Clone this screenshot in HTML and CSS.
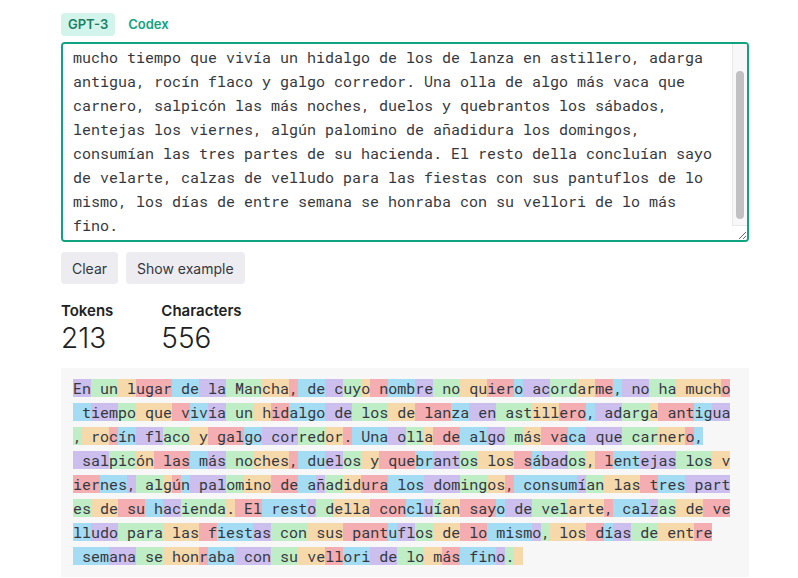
FILE: index.html
```html
<!DOCTYPE html>
<html lang="en">
  <head>
    <meta charset="UTF-8" />
    <meta name="viewport" content="width=device-width, initial-scale=1.0" />
    <title>Tokenizer</title>
    <link rel="stylesheet" href="styles.css">
  </head>
  <body>
    <div class="page">
      <div class="tabs">
        <span class="tab active">GPT-3</span>
        <span class="tab">Codex</span>
      </div>

      <div class="prompt-wrap">
        <textarea class="prompt" spellcheck="false">En un lugar de la Mancha, de cuyo nombre no quiero acordarme, no ha mucho tiempo que vivía un hidalgo de los de lanza en astillero, adarga antigua, rocín flaco y galgo corredor. Una olla de algo más vaca que carnero, salpicón las más noches, duelos y quebrantos los sábados, lentejas los viernes, algún palomino de añadidura los domingos, consumían las tres partes de su hacienda. El resto della concluían sayo de velarte, calzas de velludo para las fiestas con sus pantuflos de lo mismo, los días de entre semana se honraba con su vellori de lo más fino. </textarea>
        <div class="scrollbar"><div class="scrollbar-thumb"></div></div>
      </div>

      <div class="actions">
        <button class="btn">Clear</button>
        <button class="btn">Show example</button>
      </div>

      <div class="stats">
        <div class="stat">
          <div class="stat-label">Tokens</div>
          <div class="stat-value">213</div>
        </div>
        <div class="stat">
          <div class="stat-label">Characters</div>
          <div class="stat-value">556</div>
        </div>
      </div>

      <div class="tokens">
        <span>En</span><span> un</span><span> l</span><span>ugar</span><span> de</span><span> la</span><span> Man</span><span>cha</span><span>,</span><span> de</span><span> c</span><span>uy</span><span>o</span><span> n</span><span>omb</span><span>re</span><span> no</span><span> qu</span><span>ier</span><span>o</span><span> ac</span><span>ord</span><span>ar</span><span>me</span><span>,</span><span> no</span><span> ha</span><span> much</span><span>o</span>
        <span> t</span><span>iem</span><span>po</span><span> que</span><span> v</span><span>iv</span><span>ía</span><span> un</span><span> h</span><span>id</span><span>algo</span><span> de</span><span> los</span><span> de</span><span> lan</span><span>za</span><span> en</span><span> ast</span><span>ill</span><span>ero</span><span>,</span><span> ad</span><span>arg</span><span>a</span><span> ant</span><span>ig</span><span>ua</span>
        <span>,</span><span> ro</span><span>c</span><span>ín</span><span> fl</span><span>aco</span><span> y</span><span> gal</span><span>go</span><span> cor</span><span>red</span><span>or</span><span>.</span><span> Una</span><span> o</span><span>ll</span><span>a</span><span> de</span><span> al</span><span>go</span><span> m</span><span>ás</span><span> va</span><span>ca</span><span> que</span><span> car</span><span>ner</span><span>o</span><span>,</span>
        <span> sal</span><span>pic</span><span>ón</span><span> las</span><span> m</span><span>ás</span><span> no</span><span>ches</span><span>,</span><span> du</span><span>el</span><span>os</span><span> y</span><span> que</span><span>br</span><span>ant</span><span>os</span><span> los</span><span> s</span><span>á</span><span>bad</span><span>os</span><span>,</span><span> l</span><span>ent</span><span>ejas</span><span> los</span><span> v</span>
        <span>ier</span><span>nes</span><span>,</span><span> al</span><span>g</span><span>ú</span><span>n</span><span> pal</span><span>om</span><span>ino</span><span> de</span><span> a</span><span>ñ</span><span>ad</span><span>id</span><span>ura</span><span> los</span><span> dom</span><span>ing</span><span>os</span><span>,</span><span> consum</span><span>í</span><span>an</span><span> las</span><span> t</span><span>res</span><span> part</span>
        <span>es</span><span> de</span><span> su</span><span> h</span><span>ac</span><span>ienda</span><span>.</span><span> El</span><span> rest</span><span>o</span><span> d</span><span>ella</span><span> con</span><span>cl</span><span>u</span><span>í</span><span>an</span><span> say</span><span>o</span><span> de</span><span> vel</span><span>arte</span><span>,</span><span> cal</span><span>z</span><span>as</span><span> de</span><span> ve</span>
        <span>ll</span><span>udo</span><span> para</span><span> las</span><span> f</span><span>iest</span><span>as</span><span> con</span><span> sus</span><span> pant</span><span>u</span><span>fl</span><span>os</span><span> de</span><span> lo</span><span> mism</span><span>o</span><span>,</span><span> los</span><span> d</span><span>í</span><span>as</span><span> de</span><span> ent</span><span>re</span>
        <span> sem</span><span>ana</span><span> se</span><span> hon</span><span>r</span><span>aba</span><span> con</span><span> su</span><span> ve</span><span>ll</span><span>ori</span><span> de</span><span> lo</span><span> m</span><span>ás</span><span> fin</span><span>o</span><span>.</span><span> </span>
      </div>
    </div>

    <script>
      // keep the prompt scrolled like the live page
      document.querySelector(".prompt").scrollTop = 35;
    </script>
  </body>
</html>
```

FILE: styles.css
```css
body {
  margin: 0;
  padding: 0;
  background: #ffffff;
  font-family: Inter, "Noto Sans", Arial, sans-serif;
  color: #353740;
}

.page {
  width: 688px;
  padding: 13px 0 0 61px;
}

.tabs {
  display: flex;
  gap: 6px;
  margin-bottom: 6px;
}

.tab {
  padding: 0 7px;
  height: 23px;
  line-height: 23px;
  border-radius: 4px;
  font-size: 13px;
  font-weight: 600;
  color: #10a37f;
}

.tab.active {
  background-color: #d2f4ea;
  color: #1a7f64;
}

.prompt-wrap {
  position: relative;
}

.prompt {
  display: block;
  width: 100%;
  height: 200px;
  box-sizing: border-box;
  margin: 0;
  padding: 12px 25px 12px 10px;
  border: 2px solid #10a37f;
  border-radius: 4px;
  font-family: "Roboto Mono", "Liberation Mono", monospace;
  font-size: 15px;
  line-height: 24px;
  color: #353740;
  resize: vertical;
  outline: none;
}

.scrollbar {
  position: absolute;
  top: 2px;
  right: 2px;
  bottom: 16px;
  width: 14px;
  background-color: #f8f8f8;
  border-left: 1px solid #e8e8e8;
  border-bottom: 1px solid #e8e8e8;
  border-top-right-radius: 2px;
}

.scrollbar-thumb {
  width: 8px;
  height: 148px;
  margin: 27px 0 0 3px;
  border-radius: 4px;
  background-color: #c1c1c1;
}

.actions {
  display: flex;
  gap: 8px;
  margin-top: 10px;
}

.btn {
  height: 32px;
  padding: 0 11px;
  border: none;
  border-radius: 4px;
  background-color: #ececf1;
  color: #353740;
  font-family: inherit;
  font-size: 14px;
  cursor: pointer;
}

.btn:hover {
  background-color: #d9d9e3;
}

.stats {
  display: flex;
  gap: 48px;
  margin-top: 17px;
}

.stat-label {
  font-size: 15px;
  font-weight: 600;
  line-height: 20px;
  color: #202123;
}

.stat-value {
  font-size: 28px;
  font-weight: 300;
  line-height: 34px;
  color: #202123;
}

.tokens {
  display: flex;
  flex-wrap: wrap;
  row-gap: 6px;
  margin-top: 13px;
  padding: 11px 12px 12px;
  background-color: #f7f7f8;
  font-family: "Roboto Mono", "Liberation Mono", monospace;
  font-size: 15px;
  line-height: 18px;
  color: #353740;
}

.tokens span {
  white-space: pre;
}

.tokens span:nth-child(5n+1) {
  background-color: rgba(107, 64, 216, 0.3);
}

.tokens span:nth-child(5n+2) {
  background-color: rgba(104, 222, 122, 0.4);
}

.tokens span:nth-child(5n+3) {
  background-color: rgba(244, 172, 54, 0.4);
}

.tokens span:nth-child(5n+4) {
  background-color: rgba(239, 65, 70, 0.4);
}

.tokens span:nth-child(5n) {
  background-color: rgba(39, 181, 234, 0.4);
}
```
